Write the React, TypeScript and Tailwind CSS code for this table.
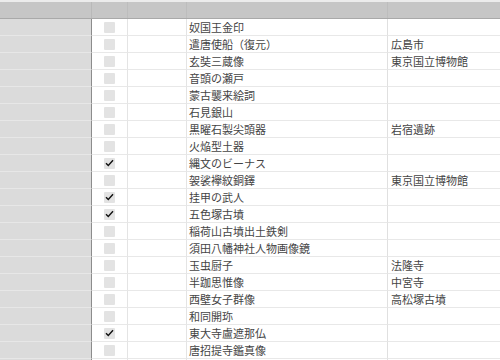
import React from 'react';

type Row = { name: string; place?: string; done?: boolean };

const rows: Row[] = [
  { name: '奴国王金印' },
  { name: '遣唐使船（復元）', place: '広島市' },
  { name: '玄奘三蔵像', place: '東京国立博物館' },
  { name: '音頭の瀬戸' },
  { name: '蒙古襲来絵詞' },
  { name: '石見銀山' },
  { name: '黒曜石製尖頭器', place: '岩宿遺跡' },
  { name: '火焔型土器' },
  { name: '縄文のビーナス', done: true },
  { name: '袈裟襷紋銅鐸', place: '東京国立博物館' },
  { name: '挂甲の武人', done: true },
  { name: '五色塚古墳', done: true },
  { name: '稲荷山古墳出土鉄剣' },
  { name: '須田八幡神社人物画像鏡' },
  { name: '玉虫厨子', place: '法隆寺' },
  { name: '半跏思惟像', place: '中宮寺' },
  { name: '西壁女子群像', place: '高松塚古墳' },
  { name: '和同開珎' },
  { name: '東大寺盧遮那仏', done: true },
  { name: '唐招提寺鑑真像' },
  { name: '' },
];

const cols = 'grid grid-cols-[92px_36px_59px_201px_1fr]';

const Check = ({ on }: { on?: boolean }) => (
  <div className="w-[11px] h-[11px] bg-[#e3e3e3] rounded-[1px] flex items-center justify-center">
    {on && (
      <svg width="9" height="8" viewBox="0 0 9 8">
        <path d="M1 4.2 L3.3 6.5 L8 1.3" fill="none" stroke="#111" strokeWidth="1.4" />
      </svg>
    )}
  </div>
);

export default function App() {
  return (
    <div
      className="w-[500px] h-[360px] overflow-hidden bg-white text-[11px] text-[#444]"
      style={{ fontFamily: '"Noto Sans CJK JP", "Noto Sans", sans-serif' }}
    >
      <div className="h-[2px] bg-[#ececec]" />
      <div className={`${cols} h-[17px] bg-[#c6c6c6] border-b border-[#a9a9a9]`}>
        <div className="border-r border-[#b9b9b9]" />
        <div className="border-r border-[#bdbdbd]" />
        <div className="border-r border-[#bdbdbd]" />
        <div className="border-r border-[#bdbdbd]" />
        <div />
      </div>
      {rows.map((r, i) => (
        <div key={i} className={`${cols} h-[17px]`}>
          <div className="bg-[#dbdbdb] border-r border-[#8c8c8c] border-b border-b-[#e7e7e7]" />
          <div className="flex items-center justify-center border-r border-[#e4e4e4] border-b border-b-[#e8e8e8]">
            <Check on={r.done} />
          </div>
          <div className="border-r border-[#e4e4e4] border-b border-b-[#e8e8e8]" />
          <div className="flex items-center pl-[2px] leading-none border-r border-[#e0e0e0] border-b border-b-[#e8e8e8] whitespace-nowrap">
            {r.name}
          </div>
          <div className="flex items-center pl-[3px] leading-none border-b border-[#e8e8e8] whitespace-nowrap">
            {r.place}
          </div>
        </div>
      ))}
    </div>
  );
}
